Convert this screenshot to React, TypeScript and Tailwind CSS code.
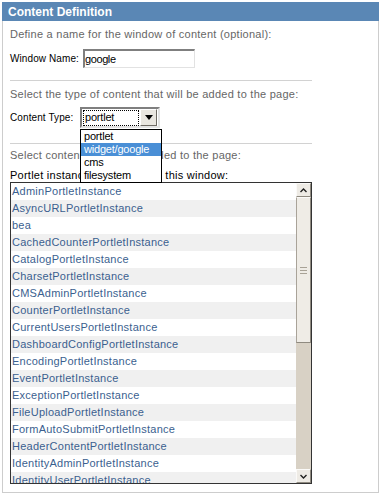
import React from "react";

const instances = [
  "AdminPortletInstance",
  "AsyncURLPortletInstance",
  "bea",
  "CachedCounterPortletInstance",
  "CatalogPortletInstance",
  "CharsetPortletInstance",
  "CMSAdminPortletInstance",
  "CounterPortletInstance",
  "CurrentUsersPortletInstance",
  "DashboardConfigPortletInstance",
  "EncodingPortletInstance",
  "EventPortletInstance",
  "ExceptionPortletInstance",
  "FileUploadPortletInstance",
  "FormAutoSubmitPortletInstance",
  "HeaderContentPortletInstance",
  "IdentityAdminPortletInstance",
  "IdentityUserPortletInstance",
  "LoginPortletInstance",
  "MenuPortletInstance",
];

const contentTypes = ["portlet", "widget/google", "cms", "filesystem"];

function ScrollButton({ dir }: { dir: "up" | "down" }) {
  return (
    <div className="h-[14px] w-full bg-[#eeebe5] border border-t-[#fbfaf8] border-l-[#fbfaf8] border-b-[#8f8a80] border-r-[#8f8a80] flex items-center justify-center">
      <svg width="7" height="5" viewBox="0 0 7 5">
        {dir === "up" ? (
          <path d="M0.5 4 L3.5 1 L6.5 4" stroke="#222" strokeWidth="1.4" fill="none" />
        ) : (
          <path d="M0.5 1 L3.5 4 L6.5 1" stroke="#222" strokeWidth="1.4" fill="none" />
        )}
      </svg>
    </div>
  );
}

export default function App() {
  return (
    <div className="w-[381px] h-[498px] bg-white p-[2px] font-['Liberation_Sans',Arial,sans-serif] text-[11px] tracking-[0.25px]">
      <div className="h-[491px] border-x border-b border-[#cdcdcd]">
        {/* Header */}
        <div className="h-[19px] -mx-px bg-[#5a87b5] pl-[6px] flex items-center text-[12px] font-bold text-white tracking-normal">
          Content Definition
        </div>

        <div className="pl-[7px]">
          <div className="mt-[7px] leading-[13px] text-[#666]">
            Define a name for the window of content (optional):
          </div>

          <div className="mt-[8px] flex items-center h-[19px]">
            <span className="text-[10px] tracking-[0.1px] text-black w-[73px]">Window Name:</span>
            <div className="w-[112px] h-[19px] border-t-2 border-l-2 border-b border-r border-t-[#7f7f7f] border-l-[#7f7f7f] border-b-[#e2e2e2] border-r-[#e2e2e2] flex items-center text-[11px] tracking-[-0.4px] text-black">
              google
            </div>
          </div>

          <div className="mt-[12px] h-px w-[302px] bg-[#d2d2d2]" />

          <div className="mt-[7px] leading-[13px] text-[#666]">
            Select the type of content that will be added to the page:
          </div>

          <div className="mt-[6px] flex items-center h-[21px]">
            <span className="text-[10px] tracking-[0.1px] text-black w-[70px]">Content Type:</span>
            <div className="relative">
              <div className="w-[80px] h-[21px] border-2 border-t-[#7f7f7f] border-l-[#7f7f7f] border-b-[#e4e4e4] border-r-[#e4e4e4] bg-white flex items-center">
                <div className="ml-[1px] w-[56px] h-[16px] border border-dotted border-black flex items-center pl-[1px] text-[11px] tracking-[-0.2px] text-black">
                  portlet
                </div>
                <div className="ml-[1px] w-[17px] h-[17px] bg-[#e9e6e0] border border-t-[#ffffff] border-l-[#ffffff] border-b-[#6f6b64] border-r-[#6f6b64] flex items-center justify-center">
                  <svg width="8" height="5" viewBox="0 0 8 5">
                    <path d="M0 0 H8 L4 5 Z" fill="#000" />
                  </svg>
                </div>
              </div>
              <div className="absolute left-0 top-[22px] w-[82px] border border-black bg-white z-10">
                {contentTypes.map((t, i) => (
                  <div
                    key={t}
                    className={`h-[13px] leading-[13px] pl-[3px] text-[11px] tracking-[-0.2px] ${
                      i === 1 ? "bg-[#4a8fd6] text-white" : "text-black"
                    }`}
                  >
                    {t}
                  </div>
                ))}
              </div>
            </div>
          </div>

          <div className="mt-[15px] h-px w-[302px] bg-[#d2d2d2]" />

          <div className="mt-[5px] leading-[13px] text-[#666]">
            Select content that will be added to the page:
          </div>

          <div className="mt-[7px] leading-[13px] text-black">
            Portlet instances that apply to this window:
          </div>

          {/* Instance list */}
          <div className="w-[302px] h-[302px] border border-[#333] flex overflow-hidden">
            <div className="flex-1 overflow-hidden">
              {instances.map((name, i) => (
                <div
                  key={name}
                  className={`h-[17px] leading-[17px] pl-[1px] text-[#3b5f8f] whitespace-nowrap ${
                    i % 2 === 1 ? "bg-[#f0f0f0]" : "bg-white"
                  }`}
                >
                  {name}
                </div>
              ))}
            </div>
            <div className="w-[15px] h-full bg-[#d8d1c5] flex flex-col">
              <ScrollButton dir="up" />
              <div className="h-[146px] bg-[#efece6] border border-t-[#fbfaf8] border-l-[#a9a399] border-b-[#8f8a80] border-r-[#8f8a80] flex items-center justify-center">
                <div className="flex flex-col gap-[2px]">
                  <div className="w-[7px] h-px bg-[#a8a296]" />
                  <div className="w-[7px] h-px bg-[#a8a296]" />
                  <div className="w-[7px] h-px bg-[#a8a296]" />
                </div>
              </div>
              <div className="flex-1" />
              <ScrollButton dir="down" />
            </div>
          </div>
        </div>
      </div>
    </div>
  );
}
